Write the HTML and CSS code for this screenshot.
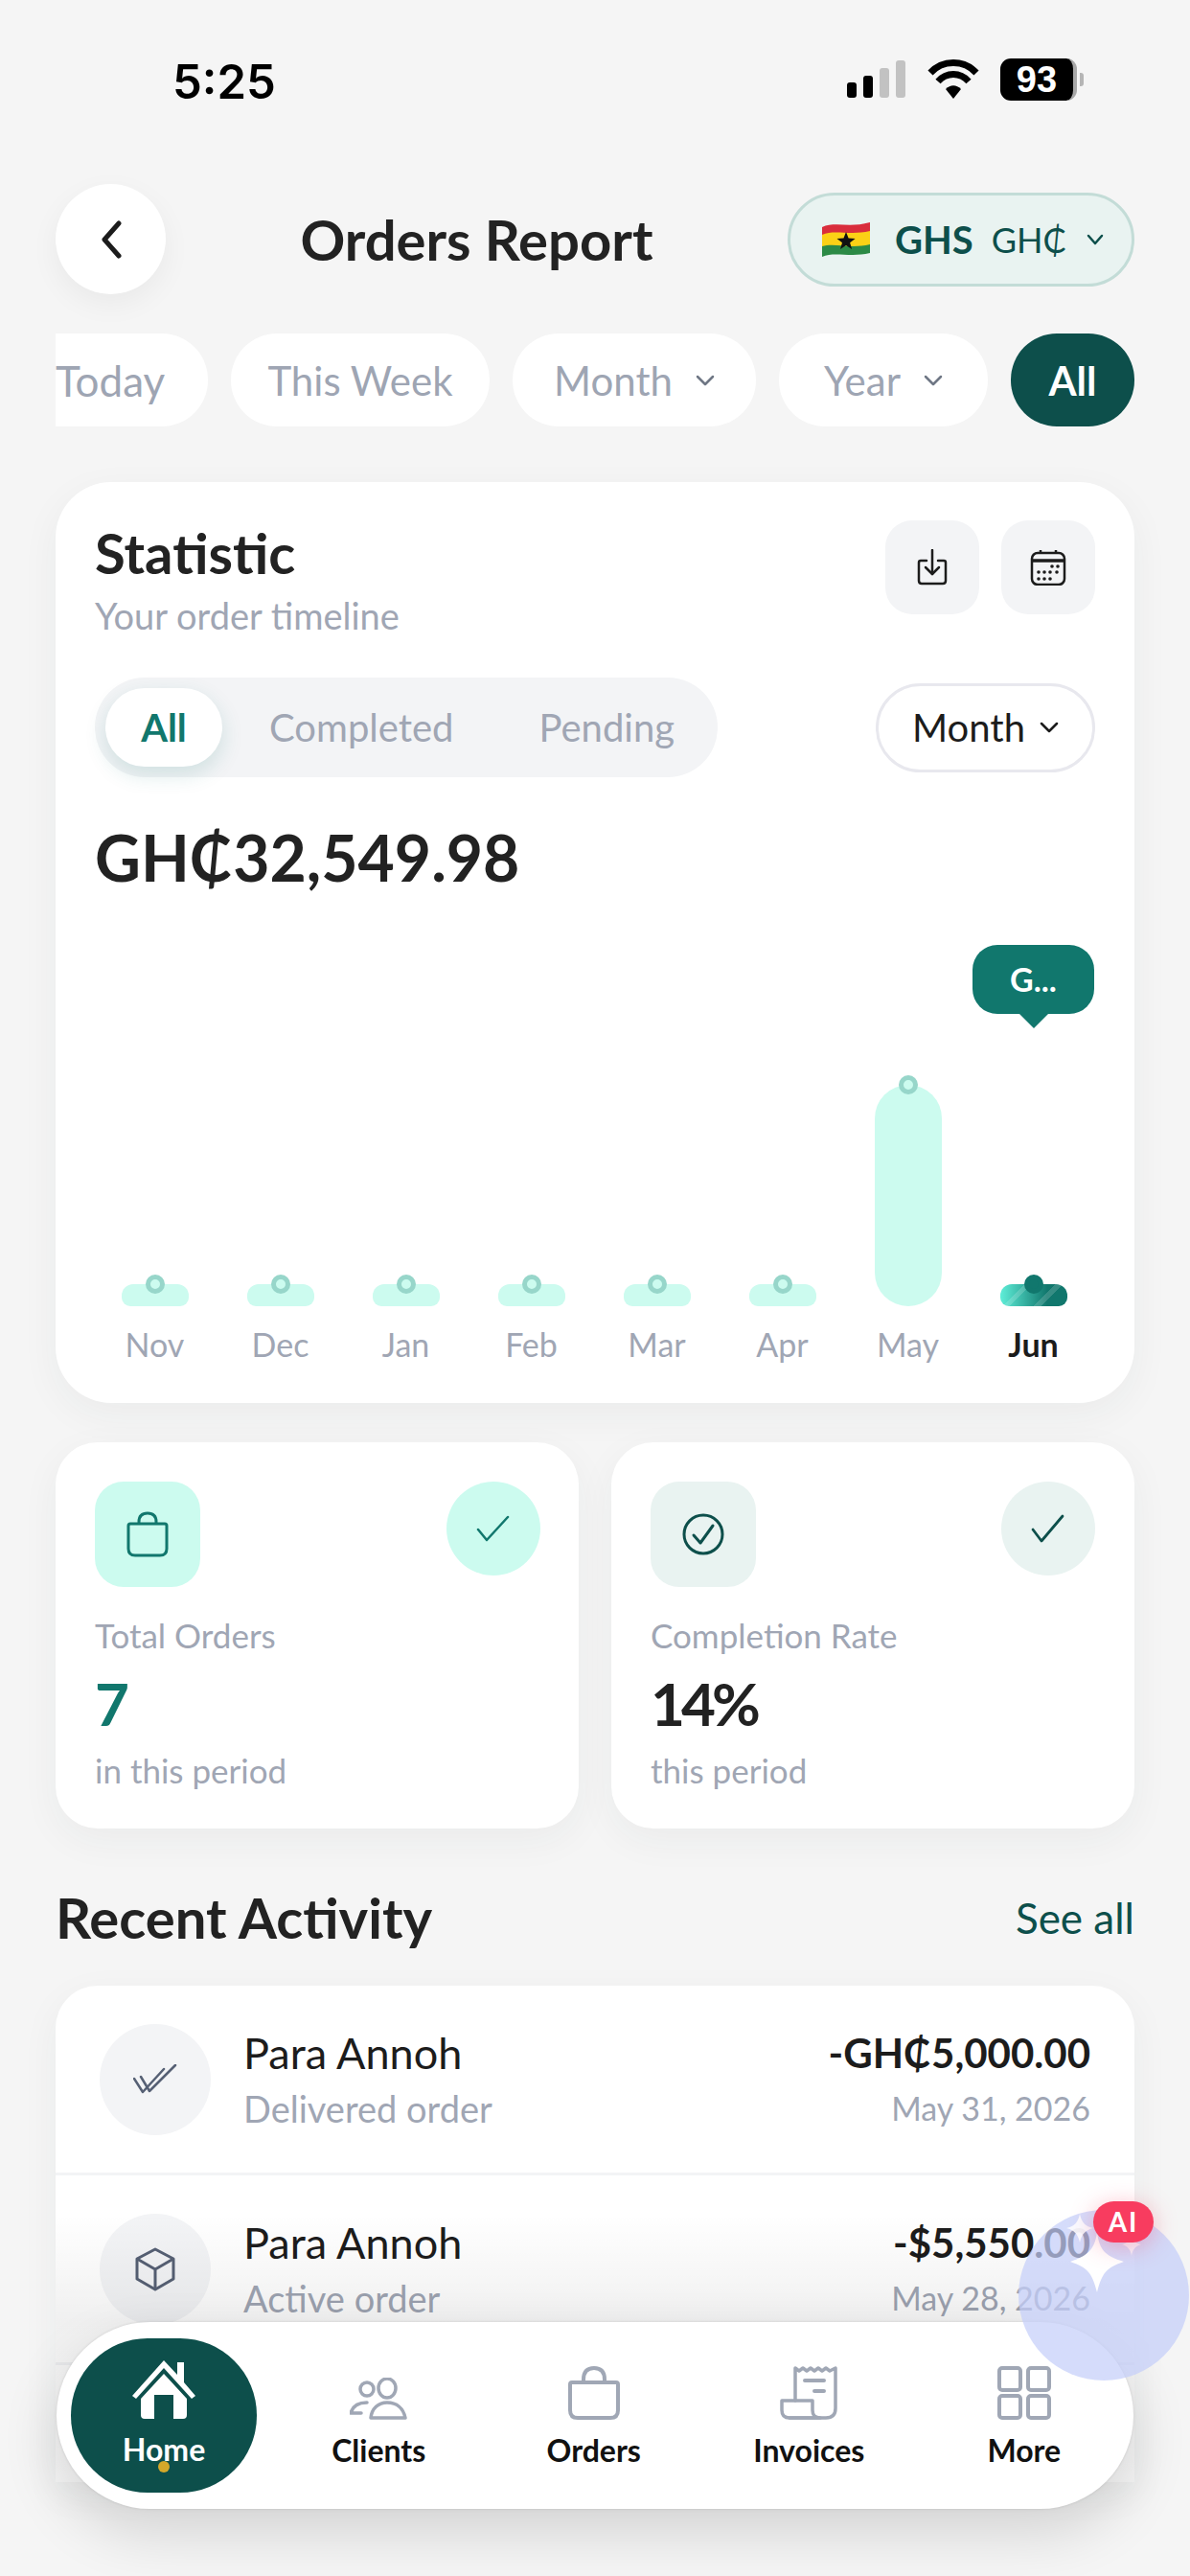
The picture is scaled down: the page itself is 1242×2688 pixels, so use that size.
FILE: index.html
```html
<!DOCTYPE html>
<html lang="en">
<head>
    <meta charset="UTF-8">
    <meta name="viewport" content="width=device-width, initial-scale=1.0">
    <title>Orders Report</title>
    <link rel="stylesheet" href="styles.css">
</head>
<body>
    <div class="screen">
        <div class="status">
            <span class="time">5:25</span>
            <div class="status-icons">
                <svg width="62" height="50" viewBox="0 0 62 50">
                    <rect x="0" y="28" width="10" height="16" rx="3" fill="#000"/>
                    <rect x="17" y="21" width="10" height="23" rx="3" fill="#000"/>
                    <rect x="34" y="13" width="10" height="31" rx="3" fill="#c2c2c2"/>
                    <rect x="51" y="5" width="10" height="39" rx="3" fill="#c2c2c2"/>
                </svg>
                <svg width="54" height="42" viewBox="0 0 54 42">
                    <path d="M3 14 C16 0 38 0 51 14" fill="none" stroke="#000" stroke-width="7"/>
                    <path d="M11 23 C20 13 34 13 43 23" fill="none" stroke="#000" stroke-width="7"/>
                    <path d="M19 31 C24 26 30 26 35 31 L27 41 Z" fill="#000"/>
                </svg>
                <div class="battery"><span class="battery-num">93</span><i class="battery-cap"></i></div>
            </div>
        </div>

        <header class="top">
            <button class="back">
                <svg width="28" height="40" viewBox="0 0 28 40"><path d="M22 3 L7 20 L22 37" fill="none" stroke="#1c1c1c" stroke-width="5" stroke-linecap="round" stroke-linejoin="round"/></svg>
            </button>
            <h1>Orders Report</h1>
            <div class="currency">
                <svg width="52" height="38" viewBox="0 0 52 38">
                    <path d="M1 6 C14 0 30 7 51 1 V14 C30 19 14 12 1 18 Z" fill="#d92d3c"/>
                    <path d="M1 14 C14 8 30 15 51 10 V25 C30 30 14 23 1 27 Z" fill="#fbd116"/>
                    <path d="M1 26 C14 22 30 29 51 24 V33 C30 38 14 31 1 37 Z" fill="#2c8a46"/>
                    <path d="M26 11 l2.6 6.6 7 .3 -5.5 4.3 2 6.8 -6.1 -4 -6 4 2 -6.800 -5.500 -4.300 7 -.3 z" fill="#111"/>
                </svg>
                <strong>GHS</strong>
                <span>GH₵</span>
                <svg class="chev" width="18" height="12" viewBox="0 0 18 12"><path d="M2 2 L9 10 L16 2" fill="none" stroke="#0d4f4b" stroke-width="2.500" stroke-linecap="round" stroke-linejoin="round"/></svg>
            </div>
        </header>

        <div class="chips">
            <div class="chip chip-today">Today</div>
            <div class="chip chip-week">This Week</div>
            <div class="chip chip-month">Month
                <svg width="20" height="12" viewBox="0 0 20 12"><path d="M2 2 L10 10 L18 2" fill="none" stroke="#6f7785" stroke-width="2.500" stroke-linecap="round" stroke-linejoin="round"/></svg>
            </div>
            <div class="chip chip-year">Year
                <svg width="20" height="12" viewBox="0 0 20 12"><path d="M2 2 L10 10 L18 2" fill="none" stroke="#6f7785" stroke-width="2.500" stroke-linecap="round" stroke-linejoin="round"/></svg>
            </div>
            <div class="chip chip-all">All</div>
        </div>

        <section class="card stat-card">
            <div class="stat-head">
                <div>
                    <h2>Statistic</h2>
                    <p class="stat-sub">Your order timeline</p>
                </div>
                <div class="stat-tools">
                    <div class="tool">
                        <svg width="32" height="38" viewBox="0 0 32 38" fill="none" stroke="#1c1c1c" stroke-width="2.500" stroke-linecap="round" stroke-linejoin="round">
                            <path d="M16 1 V26"/>
                            <path d="M9 19 L16 26 L23 19"/>
                            <path d="M10 12 H4 Q2 12 2 14 V33 Q2 36 5 36 H27 Q30 36 30 33 V14 Q30 12 28 12 H22"/>
                        </svg>
                    </div>
                    <div class="tool">
                        <svg width="38" height="38" viewBox="0 0 38 38" fill="none" stroke="#1c1c1c" stroke-width="2.500">
                            <rect x="2" y="4" width="34" height="33" rx="6"/>
                            <path d="M2 12 H36" stroke-width="3.500"/>
                            <path d="M11 1 V5 M27 1 V5"/>
                            <g fill="#1c1c1c" stroke="none">
                                <circle cx="23" cy="18" r="1.800"/><circle cx="29" cy="18" r="1.800"/>
                                <circle cx="9" cy="24" r="1.800"/><circle cx="15" cy="24" r="1.800"/><circle cx="21" cy="24" r="1.800"/><circle cx="28" cy="24" r="1.800"/>
                                <circle cx="9" cy="31" r="1.800"/><circle cx="15" cy="31" r="1.800"/><circle cx="21" cy="31" r="1.800"/>
                            </g>
                        </svg>
                    </div>
                </div>
            </div>

            <div class="filter-row">
                <div class="segment">
                    <span class="seg seg-on">All</span>
                    <span class="seg seg-completed">Completed</span>
                    <span class="seg seg-pending">Pending</span>
                </div>
                <div class="period">Month
                    <svg width="20" height="12" viewBox="0 0 20 12"><path d="M2 2 L10 10 L18 2" fill="none" stroke="#1c1c1c" stroke-width="2.500" stroke-linecap="round" stroke-linejoin="round"/></svg>
                </div>
            </div>

            <div class="amount">GH₵32,549.98</div>

            <div class="chart">
                <div class="col"><div class="bar"><i class="dot"></i></div><span class="month">Nov</span></div>
                <div class="col"><div class="bar"><i class="dot"></i></div><span class="month">Dec</span></div>
                <div class="col"><div class="bar"><i class="dot"></i></div><span class="month">Jan</span></div>
                <div class="col"><div class="bar"><i class="dot"></i></div><span class="month">Feb</span></div>
                <div class="col"><div class="bar"><i class="dot"></i></div><span class="month">Mar</span></div>
                <div class="col"><div class="bar"><i class="dot"></i></div><span class="month">Apr</span></div>
                <div class="col"><div class="bar bar-tall"><i class="dot"></i></div><span class="month">May</span></div>
                <div class="col">
                    <div class="tip">G...</div>
                    <div class="bar bar-now"><i class="dot dot-now"></i></div>
                    <span class="month month-now">Jun</span>
                </div>
            </div>
        </section>

        <div class="stats">
            <div class="card stat-box">
                <div class="box-top">
                    <div class="box-icon mint">
                        <svg width="44" height="48" viewBox="0 0 44 48" fill="none" stroke="#11776d" stroke-width="3" stroke-linejoin="round">
                            <path d="M4 13 H40 Q42 13 42 15 V39 Q42 46 35 46 H9 Q2 46 2 39 V15 Q2 13 4 13 Z"/>
                            <path d="M13 13 V11 Q13 2 22 2 Q31 2 31 11 V13"/>
                        </svg>
                    </div>
                    <div class="box-round mint">
                        <svg width="36" height="28" viewBox="0 0 36 28"><path d="M2 15 L11 26 L33 2" fill="none" stroke="#11776d" stroke-width="2.500" stroke-linecap="round" stroke-linejoin="round"/></svg>
                    </div>
                </div>
                <p class="box-label">Total Orders</p>
                <div class="box-num num-teal">7</div>
                <p class="box-label">in this period</p>
            </div>
            <div class="card stat-box">
                <div class="box-top">
                    <div class="box-icon pale">
                        <svg width="44" height="44" viewBox="0 0 44 44" fill="none" stroke="#0d4f4b" stroke-width="3" stroke-linecap="round" stroke-linejoin="round">
                            <circle cx="22" cy="22" r="20"/>
                            <path d="M12 23 L19 31 L32 13"/>
                        </svg>
                    </div>
                    <div class="box-round pale">
                        <svg width="36" height="30" viewBox="0 0 36 30"><path d="M2 16 L11 28 L33 2" fill="none" stroke="#0d4f4b" stroke-width="2.800" stroke-linecap="round" stroke-linejoin="round"/></svg>
                    </div>
                </div>
                <p class="box-label">Completion Rate</p>
                <div class="box-num">14%</div>
                <p class="box-label">this period</p>
            </div>
        </div>

        <div class="recent-head">
            <h2>Recent Activity</h2>
            <span class="see-all">See all</span>
        </div>

        <div class="card activity">
            <div class="row">
                <div class="avatar">
                    <svg width="46" height="32" viewBox="0 0 46 32" fill="none" stroke="#566074" stroke-width="2.500" stroke-linecap="round" stroke-linejoin="round">
                        <path d="M1 15 L10 29 L32 5"/>
                        <path d="M8 13 L17 28 L44 1"/>
                    </svg>
                </div>
                <div class="row-main">
                    <div class="row-name">Para Annoh</div>
                    <div class="row-sub">Delivered order</div>
                </div>
                <div class="row-side">
                    <div class="row-amt">-GH₵5,000.00</div>
                    <div class="row-sub row-date">May 31, 2026</div>
                </div>
            </div>
            <div class="row">
                <div class="avatar">
                    <svg width="44" height="46" viewBox="0 0 44 46" fill="none" stroke="#566074" stroke-width="3" stroke-linejoin="round">
                        <path d="M22 2 L41 12 V33 L22 44 L3 33 V12 Z"/>
                        <path d="M3 12 L22 23 L41 12 M22 23 V44"/>
                    </svg>
                </div>
                <div class="row-main">
                    <div class="row-name">Para Annoh</div>
                    <div class="row-sub">Active order</div>
                </div>
                <div class="row-side">
                    <div class="row-amt">-$5,550.00</div>
                    <div class="row-sub row-date">May 28, 2026</div>
                </div>
            </div>
            <div class="row row-hidden"></div>
        </div>

        <div class="fade"></div>

        <nav class="nav">
            <div class="nav-home">
                <svg width="68" height="64" viewBox="0 0 68 64">
                    <path d="M34 2 L48 17 V4 H55 V25 L67 39 L63 42 L34 10 L5 42 L1 39 Z" fill="#fff"/>
                    <path d="M34 16 L58 42 V59 Q58 63 54 63 H44 V38 H24 V63 H14 Q10 63 10 59 V42 Z" fill="#fff"/>
                </svg>
                <span>Home</span>
                <i class="nav-dot"></i>
            </div>
            <div class="nav-item">
                <svg width="60" height="44" viewBox="0 0 60 44" fill="none" stroke="#a0a7b5" stroke-width="3.500" stroke-linecap="round" stroke-linejoin="round">
                    <circle cx="18" cy="12" r="7"/>
                    <ellipse cx="39" cy="11" rx="9" ry="10"/>
                    <path d="M18 26 C8 26 3 30 1 37 H12"/>
                    <path d="M22 42 C23 32 30 26 39 26 C49 26 56 32 58 42 Z"/>
                </svg>
                <span>Clients</span>
            </div>
            <div class="nav-item">
                <svg width="54" height="56" viewBox="0 0 54 56" fill="none" stroke="#a0a7b5" stroke-width="4" stroke-linejoin="round">
                    <path d="M4 17 H50 Q52 17 52 19 V46 Q52 54 44 54 H10 Q2 54 2 46 V19 Q2 17 4 17 Z"/>
                    <path d="M16 17 V14 Q16 2 27 2 Q38 2 38 14 V17"/>
                </svg>
                <span>Orders</span>
            </div>
            <div class="nav-item">
                <svg width="60" height="56" viewBox="0 0 60 56" fill="none" stroke="#a0a7b5" stroke-width="3.500" stroke-linecap="round" stroke-linejoin="round">
                    <path d="M16 36 V2 L20 5 L24 2 L28 5 L32 2 L36 5 L40 2 L44 5 L48 2 L52 5 L58 2 V44 Q58 54 48 54 H10"/>
                    <path d="M2 36 H34 V46 Q34 54 42 54 H10 Q2 54 2 46 Z"/>
                    <path d="M26 15 H46 M36 26 H46" stroke-width="4"/>
                </svg>
                <span>Invoices</span>
            </div>
            <div class="nav-item">
                <svg width="56" height="56" viewBox="0 0 56 56" fill="none" stroke="#a0a7b5" stroke-width="4" stroke-linejoin="round">
                    <rect x="2" y="2" width="22" height="23" rx="3"/>
                    <rect x="32" y="2" width="22" height="23" rx="3"/>
                    <rect x="2" y="31" width="22" height="23" rx="3"/>
                    <rect x="32" y="31" width="22" height="23" rx="3"/>
                </svg>
                <span>More</span>
            </div>
        </nav>

        <div class="ai-fab">
            <svg class="ai-sparks" width="84" height="90" viewBox="0 0 84 90" fill="#fff">
                <path d="M14 2 C16 12 20 15 28 17 C20 19 16 23 14 32 C12 23 8 19 0 17 C8 15 12 12 14 2 Z" opacity=".85"/>
                <path d="M68 22 C69 30 72 33 78 34 C72 36 69 39 68 46 C67 39 64 36 58 34 C64 33 67 30 68 22 Z" opacity=".7"/>
                <path d="M32 22 C35 40 40 46 60 52 C42 58 37 64 32 84 C27 64 22 58 4 52 C22 46 29 40 32 22 Z"/>
            </svg>
            <span class="ai-badge">AI</span>
        </div>
    </div>
</body>
</html>
```

FILE: styles.css
```css
* {
    margin: 0;
    padding: 0;
    box-sizing: border-box;
}

body {
    font-family: 'Lato', 'DejaVu Sans', sans-serif;
    background: #f5f5f5;
    color: #222;
}

.screen {
    position: relative;
    width: 1242px;
    height: 2688px;
    overflow: hidden;
    padding: 0 58px;
    background: #f5f5f5;
}

/* Status bar */
.status {
    height: 192px;
    margin: 0 -58px;
    padding: 58px 110px 0 180px;
    display: flex;
    justify-content: space-between;
    align-items: flex-start;
}

.time {
    font-family: 'Inter', sans-serif;
    font-weight: 600;
    font-size: 49px;
    line-height: 50px;
    margin-top: 3px;
    color: #000;
}

.status-icons {
    display: flex;
    align-items: center;
    gap: 22px;
    height: 50px;
}

.battery {
    display: flex;
    align-items: center;
    gap: 3px;
    width: 88px;
}

.battery-num {
    width: 80px;
    height: 44px;
    border-radius: 11px;
    background: #000;
    border-right: 4px solid #a8a8a8;
    color: #fff;
    font-family: 'Liberation Sans', sans-serif;
    font-weight: 700;
    font-size: 38px;
    line-height: 44px;
    text-align: center;
}

.battery-cap {
    width: 4px;
    height: 14px;
    border-radius: 0 3px 3px 0;
    background: #b5b5b5;
}

/* Header */
.top {
    height: 115px;
    display: flex;
    align-items: center;
    justify-content: space-between;
}

.back {
    width: 115px;
    height: 115px;
    border: 0;
    border-radius: 50%;
    background: #fff;
    box-shadow: 0 10px 30px rgba(0, 0, 0, 0.05);
    display: flex;
    align-items: center;
    justify-content: center;
}

h1 {
    font-size: 58px;
    font-weight: 700;
    color: #222;
}

.currency {
    width: 362px;
    height: 98px;
    border: 3px solid #c3dcd7;
    border-radius: 49px;
    background: #e9f3f1;
    display: flex;
    align-items: center;
    padding-left: 32px;
    color: #0d4f4b;
    font-size: 36px;
}

.currency strong {
    margin-left: 25px;
    font-size: 40px;
}

.currency span {
    margin-left: 19px;
}

.currency .chev {
    margin-left: 20px;
}

/* Range chips */
.chips {
    margin-top: 41px;
    height: 97px;
    display: flex;
    gap: 24px;
    overflow: hidden;
}

.chip {
    height: 97px;
    flex: none;
    border-radius: 48px;
    background: #fff;
    display: flex;
    align-items: center;
    justify-content: center;
    gap: 24px;
    font-size: 42px;
    color: #9ea5b3;
}

.chip-today {
    width: 159px;
    font-size: 44px;
    justify-content: flex-start;
    border-radius: 0 48px 48px 0;
}

.chip-week { width: 270px; }
.chip-month { width: 254px; }
.chip-year { width: 218px; }

.chip-all {
    width: 129px;
    background: #0d4f4b;
    color: #fff;
    font-weight: 700;
}

/* Cards */
.card {
    background: #fff;
    box-shadow: 0 12px 40px rgba(30, 60, 60, 0.05);
}

.stat-card {
    margin-top: 58px;
    height: 961px;
    border-radius: 58px;
    padding: 40px 41px 0;
}

.stat-head {
    display: flex;
    justify-content: space-between;
}

h2 {
    font-size: 58px;
    font-weight: 700;
    line-height: 68px;
    color: #222;
}

.stat-sub {
    font-size: 38px;
    line-height: 46px;
    margin-top: 8px;
    color: #a0a6b4;
}

.stat-tools {
    display: flex;
    gap: 23px;
}

.tool {
    width: 98px;
    height: 98px;
    border-radius: 28px;
    background: #f3f4f6;
    display: flex;
    align-items: center;
    justify-content: center;
}

.filter-row {
    margin-top: 42px;
    display: flex;
    justify-content: space-between;
    align-items: center;
}

.segment {
    position: relative;
    width: 650px;
    height: 104px;
    border-radius: 52px;
    background: #f3f4f6;
    display: flex;
    align-items: center;
    padding-left: 11px;
    font-size: 40px;
    color: #a0a6b4;
}

.seg-on {
    width: 122px;
    height: 82px;
    border-radius: 41px;
    background: #fff;
    color: #11776d;
    font-weight: 700;
    display: flex;
    align-items: center;
    justify-content: center;
    box-shadow: 0 8px 22px rgba(17, 119, 109, 0.16);
}

.seg-completed { margin-left: 49px; }
.seg-pending { margin-left: 89px; }

.period {
    width: 229px;
    height: 93px;
    border: 3px solid #e8e8ee;
    border-radius: 47px;
    display: flex;
    align-items: center;
    justify-content: center;
    gap: 15px;
    font-size: 40px;
    color: #1c1c1c;
}

.amount {
    margin-top: 42px;
    font-size: 66px;
    font-weight: 700;
    line-height: 84px;
    color: #222;
}

/* Chart */
.chart {
    position: relative;
    margin: 166px 0 0 -3px;
    width: 1048px;
    height: 320px;
    display: flex;
    align-items: flex-end;
}

.col {
    position: relative;
    width: 131px;
    display: flex;
    flex-direction: column;
    align-items: center;
}

.bar {
    position: relative;
    width: 70px;
    height: 23px;
    border-radius: 12px 12px 9px 9px;
    background: #ccfbef;
}

.bar-tall {
    height: 231px;
    border-radius: 35px;
}

.bar-now {
    background: repeating-linear-gradient(135deg, rgba(255, 255, 255, 0) 0 18px, rgba(255, 255, 255, 0.16) 18px 23px), linear-gradient(90deg, #5eeed8, #11776d 70%);
}

.dot {
    position: absolute;
    top: -10px;
    left: 25px;
    width: 20px;
    height: 20px;
    border-radius: 50%;
    border: 5px solid #97d6ca;
    background: #ccfbef;
}

.dot-now {
    border-color: #11776d;
    background: #11776d;
}

.month {
    margin-top: 20px;
    font-size: 34px;
    line-height: 40px;
    color: #a0a6b4;
}

.month-now {
    color: #1c1c1c;
    font-weight: 700;
}

.tip {
    position: absolute;
    top: -354px;
    left: 2px;
    width: 127px;
    height: 72px;
    border-radius: 26px;
    background: #11776d;
    color: #fff;
    font-size: 34px;
    font-weight: 700;
    line-height: 72px;
    text-align: center;
}

.tip::after {
    content: "";
    position: absolute;
    left: 49px;
    top: 72px;
    border: 15px solid transparent;
    border-top-color: #11776d;
    border-bottom: 0;
}

/* Stat boxes */
.stats {
    margin-top: 41px;
    display: flex;
    gap: 34px;
}

.stat-box {
    flex: 1;
    height: 403px;
    border-radius: 44px;
    padding: 41px 41px 0;
}

.box-top {
    display: flex;
    justify-content: space-between;
    align-items: flex-start;
    margin-bottom: 28px;
}

.box-icon {
    width: 110px;
    height: 110px;
    border-radius: 30px;
    display: flex;
    align-items: center;
    justify-content: center;
}

.box-round {
    width: 98px;
    height: 98px;
    border-radius: 50%;
    display: flex;
    align-items: center;
    justify-content: center;
}

.stat-box:first-child .box-round {
    margin-right: -1px;
}

.mint { background: #ccfbef; }
.pale { background: #e9f3f1; }

.box-label {
    font-size: 35px;
    line-height: 44px;
    color: #a0a6b4;
}

.box-num {
    font-size: 62px;
    font-weight: 700;
    line-height: 76px;
    letter-spacing: -4px;
    margin: 11px 0 10px;
    color: #222;
}

.num-teal { color: #11776d; }

/* Recent activity */
.recent-head {
    margin-top: 59px;
    height: 68px;
    display: flex;
    justify-content: space-between;
    align-items: center;
}

.see-all {
    font-size: 44px;
    color: #0d4f4b;
}

.activity {
    margin-top: 37px;
    height: 518px;
    border-radius: 44px 44px 0 0;
}

.row {
    height: 198px;
    padding: 40px 46px 0 46px;
    display: flex;
    border-bottom: 3px solid #f3f4f6;
}

.row-hidden {
    border-bottom: 0;
    height: 120px;
}

.avatar {
    flex: none;
    width: 116px;
    height: 116px;
    border-radius: 50%;
    background: #f3f4f6;
    display: flex;
    align-items: center;
    justify-content: center;
}

.row-main {
    flex: 1;
    margin-left: 34px;
}

.row-side {
    text-align: right;
}

.row-name,
.row-amt {
    font-size: 45px;
    line-height: 50px;
    margin-top: 5px;
    color: #1c1c1c;
}

.row-amt {
    font-weight: 700;
    font-size: 42px;
}

.row-sub {
    margin-top: 10px;
    font-size: 38px;
    line-height: 46px;
    color: #a0a6b4;
}

.row-date {
    font-size: 34px;
}

/* Fade over the list, under the floating nav */
.fade {
    position: absolute;
    left: 58px;
    right: 58px;
    top: 2310px;
    height: 280px;
    background: linear-gradient(180deg, rgba(0, 0, 0, 0) 0, rgba(0, 0, 0, 0.06) 113px, rgba(0, 0, 0, 0.03) 280px);
}

.nav {
    position: absolute;
    left: 59px;
    top: 2423px;
    width: 1124px;
    height: 195px;
    border-radius: 98px;
    background: #fff;
    box-shadow: 0 0 3px rgba(0, 0, 0, 0.12), 0 24px 60px rgba(0, 0, 0, 0.14);
    display: flex;
    align-items: center;
    padding: 0 2px 0 15px;
}

.nav-home {
    position: relative;
    flex: none;
    width: 194px;
    height: 161px;
    margin-right: 15px;
    border-radius: 80px;
    background: #0d4f4b;
    color: #fff;
    display: flex;
    flex-direction: column;
    align-items: center;
    padding-top: 21px;
    gap: 11px;
    font-size: 32px;
    font-weight: 700;
}

.nav-dot {
    position: absolute;
    top: 128px;
    left: 91px;
    width: 12px;
    height: 12px;
    border-radius: 50%;
    background: #d4a82a;
}

.nav-item {
    flex: 1;
    height: 161px;
    display: flex;
    flex-direction: column;
    align-items: center;
    justify-content: flex-end;
    gap: 12px;
    padding-bottom: 25px;
    font-size: 32px;
    font-weight: 700;
    color: #111;
}

/* AI button */
.ai-fab {
    position: absolute;
    left: 1063px;
    top: 2306px;
    width: 178px;
    height: 178px;
    border-radius: 50%;
    background: rgba(197, 207, 250, 0.72);
}

.ai-sparks {
    position: absolute;
    left: 50px;
    top: 2px;
}

.ai-badge {
    position: absolute;
    left: 78px;
    top: -9px;
    width: 63px;
    height: 43px;
    border-radius: 22px;
    background: #f83c5f;
    box-shadow: 0 4px 24px rgba(248, 60, 95, 0.35);
    color: #fff;
    font-size: 28px;
    font-weight: 700;
    line-height: 43px;
    text-align: center;
    letter-spacing: 2px;
}
```
